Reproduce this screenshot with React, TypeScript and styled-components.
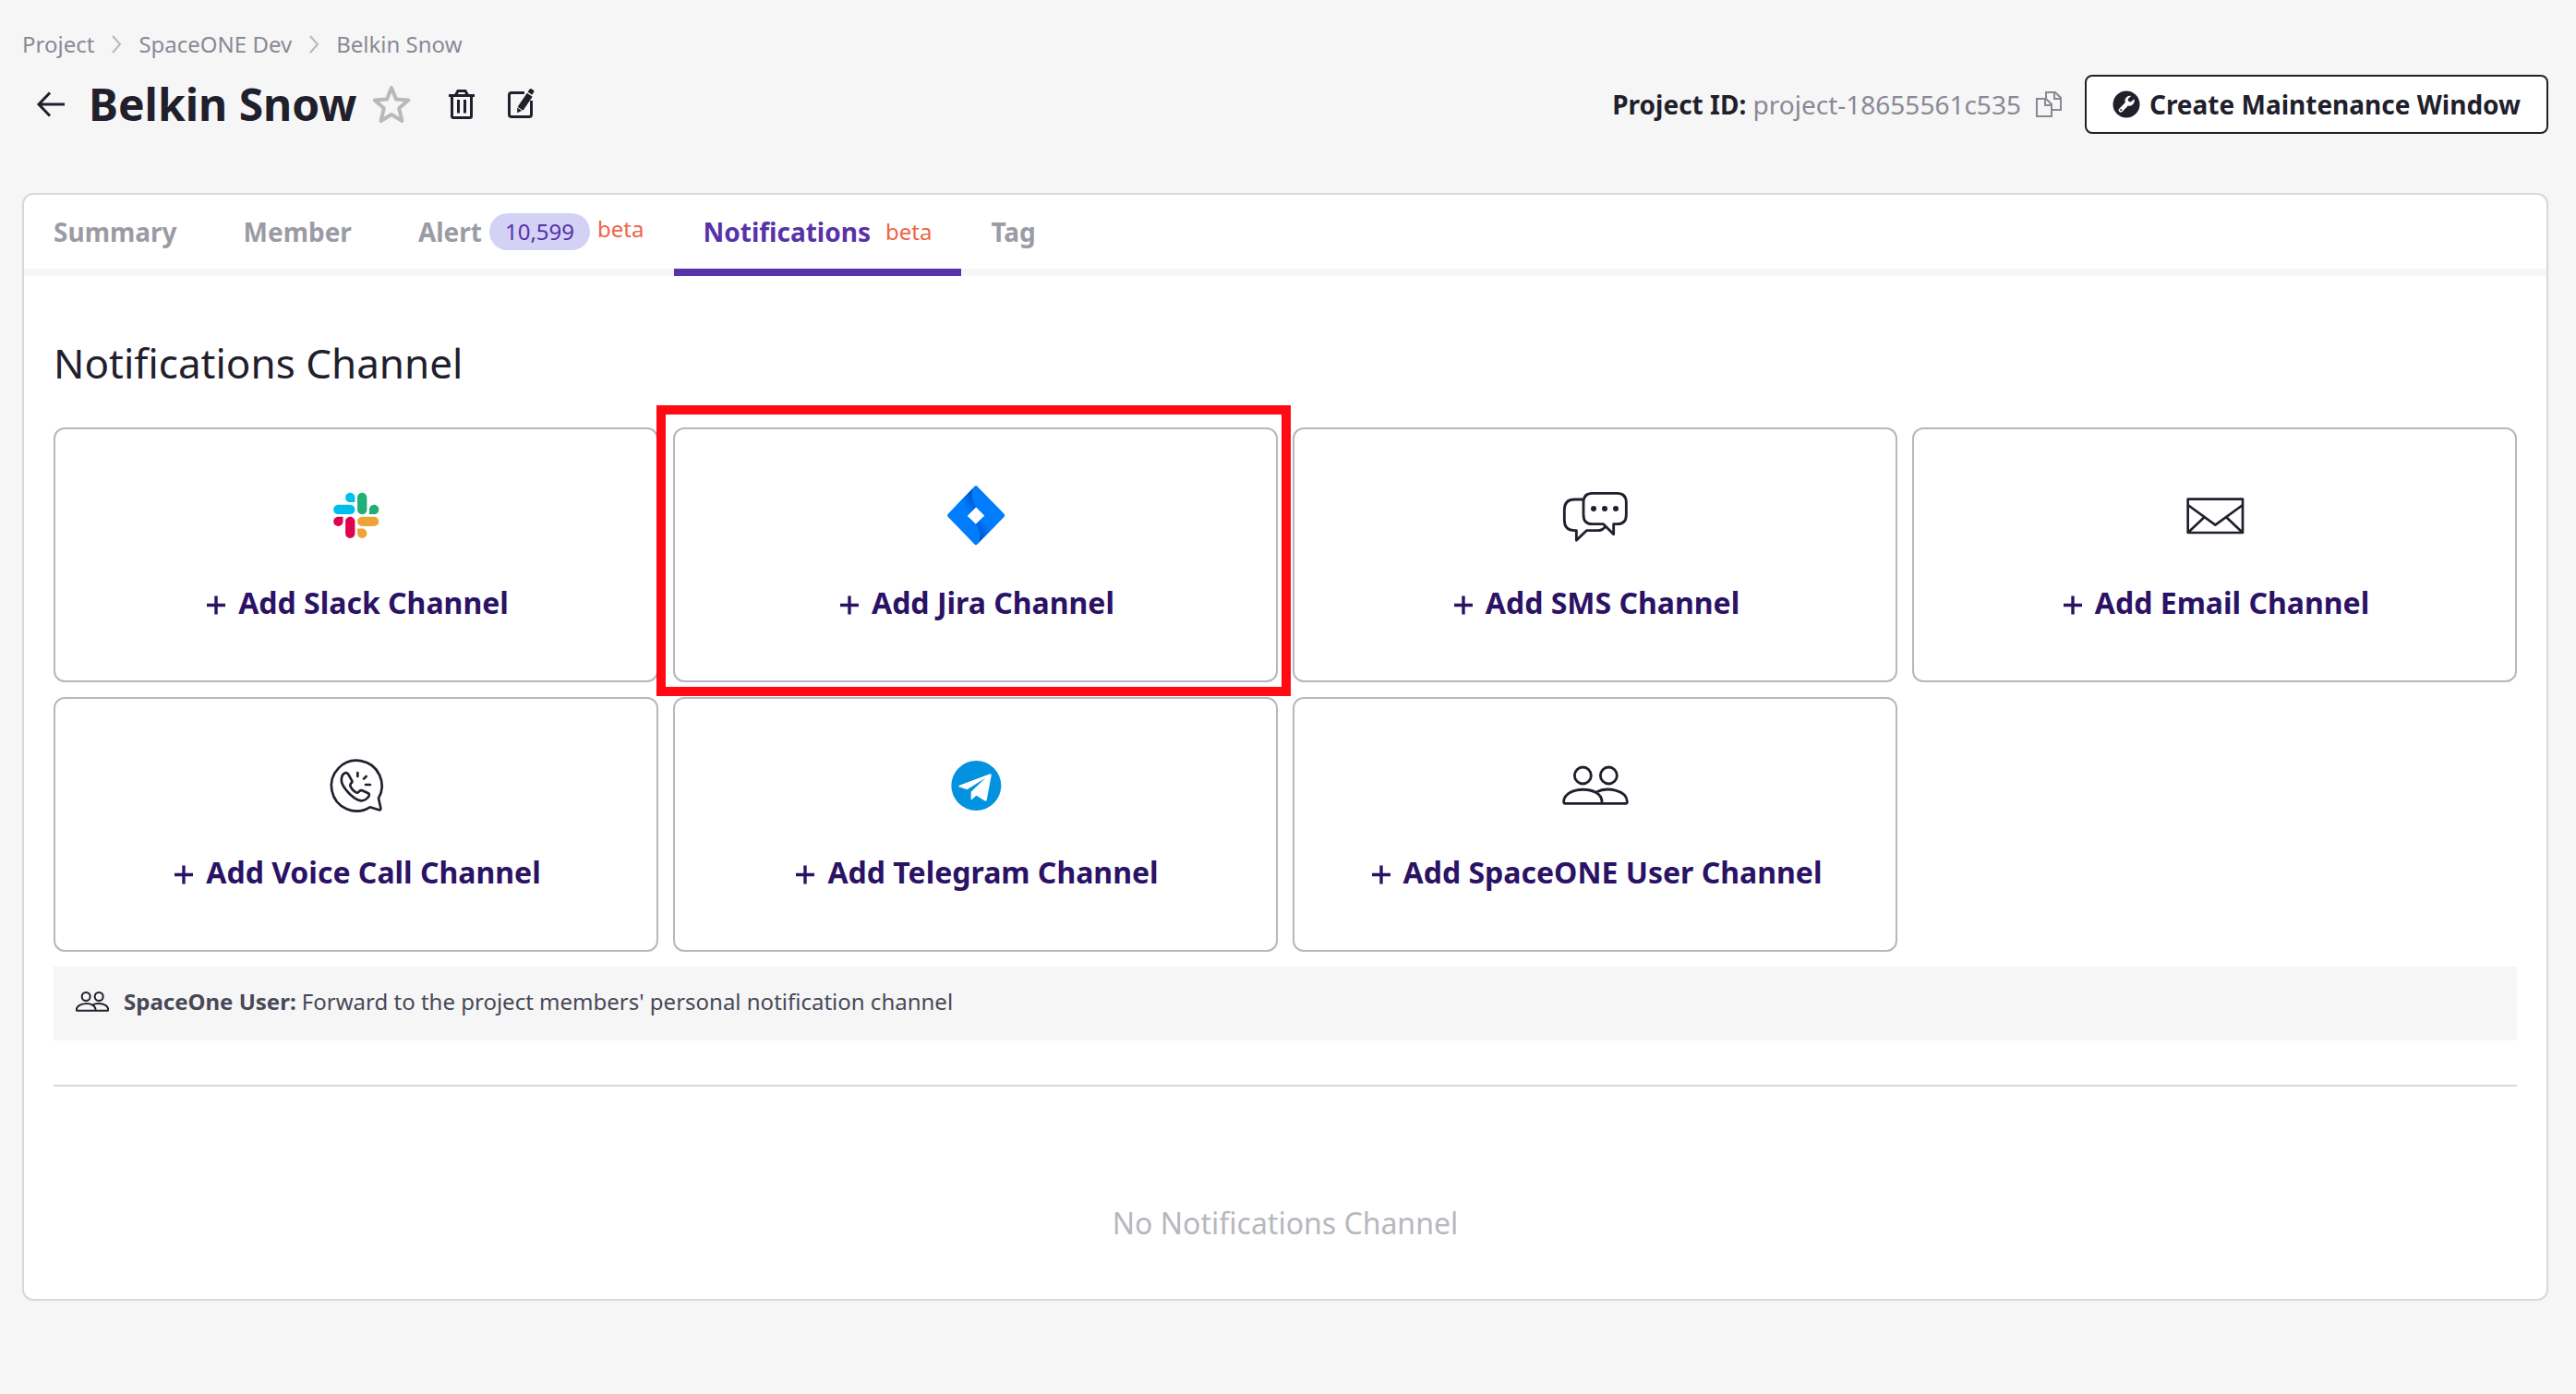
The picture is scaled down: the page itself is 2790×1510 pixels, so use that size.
import React from 'react';
import styled, { createGlobalStyle } from 'styled-components';

const ink = '#1f202c';

const GlobalStyle = createGlobalStyle`
  *, *::before, *::after { box-sizing: border-box; }
  body {
    margin: 0;
    background: #f6f6f6;
    color: ${ink};
    font-family: "Noto Sans", "Open Sans", sans-serif;
  }
  button {
    font-family: inherit;
    color: inherit;
    cursor: pointer;
  }
  svg { display: block; flex: none; }
`;

const Page = styled.div`
  padding: 32px 30px 100px 24px;
`;

const Breadcrumbs = styled.nav`
  display: flex;
  align-items: center;
  gap: 17px;
  font-size: 24px;
  line-height: 32px;
  a {
    color: #898995;
    text-decoration: none;
  }
`;

const Header = styled.header`
  display: flex;
  align-items: center;
  justify-content: space-between;
  min-height: 64px;
  margin: 17px 0 64px;
`;

const HeaderLeft = styled.div`
  display: flex;
  align-items: center;
  padding-left: 8px;
`;

const HeaderRight = styled.div`
  display: flex;
  align-items: center;
`;

const Title = styled.h1`
  margin: 0 14px 0 16px;
  font-size: 48px;
  line-height: 64px;
  font-weight: 700;
`;

const IconButton = styled.button`
  display: flex;
  width: 48px;
  height: 48px;
  padding: 0;
  border: 0;
  background: none;
`;

const Actions = styled.div`
  display: flex;
  gap: 16px;
  margin-left: 28px;
`;

const ProjectId = styled.p`
  margin: 0;
  font-size: 28px;
  line-height: 40px;
  color: #898995;
  strong { color: ${ink}; }
`;

const CopyButton = styled(IconButton)`
  width: 32px;
  height: 32px;
  margin: 0 23px 0 14px;
`;

const MaintenanceButton = styled.button`
  display: flex;
  align-items: center;
  gap: 10px;
  height: 64px;
  padding: 0 28px;
  border: 2px solid ${ink};
  border-radius: 8px;
  background: #fff;
  font-size: 28px;
  font-weight: 700;
`;

const Panel = styled.main`
  border: 2px solid #d8d8da;
  border-radius: 12px;
  background: #fff;
`;

const Tabs = styled.div`
  display: flex;
  height: 88px;
  box-shadow: inset 0 -8px #f6f6f6;
`;

const Tab = styled.button<{ $active?: boolean }>`
  display: flex;
  align-items: center;
  padding: 0 32px 8px;
  border: 0;
  background: none;
  font-size: 28px;
  line-height: 40px;
  font-weight: 700;
  color: ${p => (p.$active ? '#5832a8' : '#9b9ba5')};
  box-shadow: ${p => (p.$active ? 'inset 0 -8px #5832a8' : 'none')};
`;

const TabLabel = styled.span`
  margin-right: 8px;
`;

const Count = styled.span`
  padding: 0 17px;
  border-radius: 20px;
  background: #d3d1f6;
  color: #5832a8;
  font-size: 24px;
  font-weight: 400;
`;

const Beta = styled.span<{ $raised?: boolean }>`
  margin-left: 8px;
  padding-bottom: ${p => (p.$raised ? '6px' : '0')};
  color: #ee6547;
  font-size: 24px;
  font-weight: 400;
`;

const Body = styled.section`
  padding: 62px 32px 60px;
`;

const Heading = styled.h2`
  margin: 0 0 38px;
  font-size: 44px;
  line-height: 64px;
  font-weight: 400;
`;

const ChannelGrid = styled.div`
  display: grid;
  grid-template-columns: repeat(4, 1fr);
  gap: 16px;
`;

const ChannelCell = styled.div`
  position: relative;
  display: flex;
`;

const Channel = styled.button`
  flex: 1;
  display: flex;
  flex-direction: column;
  align-items: center;
  gap: 38px;
  padding: 58px 16px 64px;
  border: 2px solid #b7b7bd;
  border-radius: 12px;
  background: #fff;
`;

const Highlight = styled.div`
  position: absolute;
  inset: -24px -14px -15px -18px;
  border: 10px solid #ff0a12;
  pointer-events: none;
  z-index: 1;
`;

const ChannelLabel = styled.span`
  display: flex;
  align-items: center;
  gap: 12px;
  font-size: 32px;
  line-height: 40px;
  font-weight: 700;
  color: #2b1265;
`;

const Info = styled.p`
  display: flex;
  align-items: center;
  gap: 16px;
  margin: 16px 0 48px;
  padding: 18px 24px 22px;
  background: #f6f6f6;
  font-size: 24px;
  line-height: 40px;
  color: #484858;
`;

const Divider = styled.hr`
  margin: 0;
  border: 0;
  border-top: 2px solid #d8d8da;
`;

const Empty = styled.p`
  margin: 0;
  padding-top: 126px;
  text-align: center;
  font-size: 32px;
  line-height: 44px;
  color: #b7b7bd;
`;

const Chevron = () => (
  <svg width="14" height="20" viewBox="0 0 14 20" fill="none" stroke="#b7b7bd" strokeWidth="2">
    <path d="M3 1l8 9-8 9" />
  </svg>
);

const BackIcon = () => (
  <svg width="48" height="48" viewBox="0 0 48 48" fill="none" stroke={ink} strokeWidth="3">
    <path d="M38 24H10M22 11.500L10 24l12 12.500" />
  </svg>
);

const StarIcon = () => (
  <svg width="48" height="48" viewBox="0 0 48 48" fill="none" stroke="#b9b9bc" strokeWidth="4" strokeLinejoin="round">
    <path d="M24 6l5 12.500 13.200 1-10 8.800 3.200 13.700L24 35l-11.400 7 3.200-13.700-10-8.800 13.200-1z" />
  </svg>
);

const TrashIcon = () => (
  <svg width="48" height="48" viewBox="0 0 48 48" fill="none" stroke={ink} strokeWidth="3">
    <path d="M10 14.500h28M17.500 14l2.500-4.500h8l2.500 4.500M13.500 15v22q0 1.500 1.500 1.500h18q1.500 0 1.500-1.500V15M20.500 19v14.500M27.500 19v14.500" />
  </svg>
);

const EditIcon = () => (
  <svg width="48" height="48" viewBox="0 0 48 48" fill="none">
    <path d="M28 11.500H14q-2.500 0-2.500 2.500v21q0 2.500 2.500 2.500h19q2.500 0 2.500-2.500V20" stroke={ink} strokeWidth="3" />
    <path d="M30.800 11.800l5.900 4-10.200 15-5.900-4z" fill={ink} />
    <path d="M20.300 27.500l4.800 3.400-5 2.300z" fill={ink} />
    <path d="M31.600 10.600l1.900-2.800q1-1.300 2.300-.4l1.800 1.200q1.400 1 .5 2.300l-1.900 2.800z" fill={ink} />
  </svg>
);

const CopyIcon = () => (
  <svg width="32" height="32" viewBox="0 0 32 32" fill="none" stroke="#898995" strokeWidth="2">
    <path d="M3 10h10l6 6v13H3zM12 10v7h7" />
    <path d="M13 9V3h10l6 6v13h-9M22 3v7h7" />
  </svg>
);

const WrenchIcon = () => (
  <svg width="30" height="30" viewBox="0 0 30 30">
    <circle cx="15" cy="15" r="14.500" fill={ink} />
    <path d="M23.500 9.200l-3.700 3.200-2.500-.6-.7-2.500 3.500-3.400a5.600 5.600 0 0 0-6.500 7.300l-6.300 6.500a2.200 2.200 0 0 0 3.200 3.200l6.400-6.400a5.600 5.600 0 0 0 6.600-7.300z" fill="#fff" />
    <circle cx="9.200" cy="21" r="1" fill={ink} />
  </svg>
);

const PlusIcon = () => (
  <svg width="26" height="26" viewBox="0 0 26 26" fill="none" stroke="#2b1265" strokeWidth="3.400">
    <path d="M4 15.500h20M14 5.500v20" />
  </svg>
);

const SlackIcon = () => (
  <svg width="72" height="72" viewBox="-28 -27 180 180">
    <path fill="#e1024f" d="M25.800 77.600c0 7.100-5.800 12.900-12.900 12.900S0 84.700 0 77.600s5.800-12.900 12.900-12.900h12.900v12.900zm6.500 0c0-7.100 5.800-12.900 12.900-12.900s12.900 5.800 12.900 12.900v32.300c0 7.100-5.800 12.900-12.900 12.900s-12.900-5.800-12.900-12.900V77.600z" />
    <path fill="#00bfef" d="M45.200 25.800c-7.100 0-12.900-5.800-12.900-12.900S38.100 0 45.200 0s12.900 5.800 12.900 12.900v12.900H45.200zm0 6.500c7.100 0 12.900 5.800 12.900 12.900s-5.800 12.900-12.900 12.900H12.900C5.800 58.100 0 52.300 0 45.200s5.800-12.900 12.900-12.900h32.300z" />
    <path fill="#21af76" d="M97 45.200c0-7.100 5.800-12.900 12.900-12.900s12.900 5.800 12.900 12.900-5.800 12.900-12.900 12.900H97V45.200zm-6.500 0c0 7.100-5.800 12.900-12.900 12.900s-12.900-5.800-12.900-12.900V12.900C64.700 5.800 70.500 0 77.600 0s12.900 5.800 12.900 12.900v32.300z" />
    <path fill="#eda53a" d="M77.600 97c7.100 0 12.900 5.800 12.900 12.900s-5.800 12.900-12.900 12.900-12.900-5.800-12.900-12.900V97h12.900zm0-6.500c-7.100 0-12.900-5.800-12.900-12.900s5.800-12.900 12.900-12.900h32.300c7.100 0 12.900 5.800 12.900 12.900s-5.800 12.900-12.900 12.900H77.600z" />
  </svg>
);

const JiraIcon = () => (
  <svg width="72" height="72" viewBox="153 69 216 216">
    <defs>
      <linearGradient id="jiraTop" gradientUnits="userSpaceOnUse" x1="254" y1="112" x2="218" y2="134">
        <stop offset="0.100" stopColor="#0055cf" />
        <stop offset="1" stopColor="#007dfc" />
      </linearGradient>
      <linearGradient id="jiraBottom" gradientUnits="userSpaceOnUse" x1="268" y1="240" x2="304" y2="216">
        <stop offset="0.100" stopColor="#0055cf" />
        <stop offset="1" stopColor="#007dfc" />
      </linearGradient>
    </defs>
    <path fill="#007dfc" fillRule="evenodd" d="M257 80q4-4 8 0l88 90q4 5 0 9l-88 90q-4 4-8 0l-87-90q-4-4 0-9zM261 148l-28 28 28 27 28-27z" />
    <path fill="url(#jiraTop)" d="M251 87q-10 35 10 61l-28 28-38-31z" />
    <path fill="url(#jiraBottom)" d="M271 262q10-34-10-59l28-27 37 30z" />
  </svg>
);

const SmsIcon = () => (
  <svg width="72" height="72" viewBox="156 69 216 216" fill="none" stroke={ink} strokeWidth="8.500" strokeLinejoin="round">
    <path d="M224 123h-28q-33 0-33 34v33q0 34 33 34h6v32l33-32h36q16 0 25-13" />
    <path d="M254 103h80q30 0 30 30v40q0 30-30 30h-11v33l-33-33h-36q-29 0-29-30v-40q0-30 29-30z" />
    <g fill={ink} stroke="none">
      <circle cx="258" cy="153" r="9" />
      <circle cx="294" cy="153" r="9" />
      <circle cx="330" cy="153" r="9" />
    </g>
  </svg>
);

const EmailIcon = () => (
  <svg width="72" height="72" viewBox="158 69 216 216" fill="none" stroke={ink} strokeWidth="8" strokeLinejoin="round">
    <path d="M178 122h178v109H178zM178 141l89 65 89-65M178 231l54-51M356 231l-54-51" />
  </svg>
);

const VoiceIcon = () => (
  <svg width="72" height="72" viewBox="149 75 216 216" fill="none" stroke={ink} strokeWidth="8" strokeLinejoin="round" strokeLinecap="round">
    <path d="M329 224a82 82 0 1 0-28 29l29 9q7 1 6-6z" />
    <path d="M213 147q10-10 17-2l12 21q3 5-2 9-5 5-2 11 4 9 13 16 6 5 10 4 3-1 6-5 4-4 9-2l18 8q8 4 3 11-8 13-23 14-14 1-35-18-22-21-29-39-4-17 3-28z" />
    <path d="M261 141v12M289 153l-8 8M287 180h15" />
  </svg>
);

const TelegramIcon = () => (
  <svg width="72" height="72" viewBox="152 75 216 216">
    <circle cx="261" cy="183" r="81" fill="#0392e0" />
    <path fill="#fff" d="M206 182l100-37q5-1 4 5l-15 80q-2 5-7 2l-27-17-14 13q-3 2-3-3v-22l47-45-60 38-26-9q-4-2 1-5z" />
  </svg>
);

const UsersIcon = ({ size = 72, weight = 8.5 }: { size?: number; weight?: number }) => (
  <svg width={size} height={size} viewBox="156 75 216 216" fill="none" stroke={ink} strokeWidth={weight} strokeLinejoin="round">
    <ellipse cx="223" cy="150" rx="27" ry="27" />
    <ellipse cx="307" cy="150" rx="27" ry="27" />
    <path d="M161 234c3-50 121-52 124 0q0 7-4 7H165q-4 0-4-7zM267 204c34-18 97-7 100 30q0 7-4 7h-80" />
  </svg>
);

const channels = [
  { name: 'Add Slack Channel', icon: <SlackIcon /> },
  { name: 'Add Jira Channel', icon: <JiraIcon />, highlighted: true },
  { name: 'Add SMS Channel', icon: <SmsIcon /> },
  { name: 'Add Email Channel', icon: <EmailIcon /> },
  { name: 'Add Voice Call Channel', icon: <VoiceIcon /> },
  { name: 'Add Telegram Channel', icon: <TelegramIcon /> },
  { name: 'Add SpaceONE User Channel', icon: <UsersIcon /> },
];

export default function App() {
  return (
    <>
      <GlobalStyle />
      <Page>
        <Breadcrumbs aria-label="Breadcrumb">
          <a href="#project">Project</a>
          <Chevron />
          <a href="#spaceone-dev">SpaceONE Dev</a>
          <Chevron />
          <a href="#belkin-snow">Belkin Snow</a>
        </Breadcrumbs>
        <Header>
          <HeaderLeft>
            <IconButton aria-label="Back"><BackIcon /></IconButton>
            <Title>Belkin Snow</Title>
            <IconButton aria-label="Favorite"><StarIcon /></IconButton>
            <Actions>
              <IconButton aria-label="Delete"><TrashIcon /></IconButton>
              <IconButton aria-label="Edit"><EditIcon /></IconButton>
            </Actions>
          </HeaderLeft>
          <HeaderRight>
            <ProjectId><strong>Project ID:</strong> project-18655561c535</ProjectId>
            <CopyButton aria-label="Copy project ID"><CopyIcon /></CopyButton>
            <MaintenanceButton><WrenchIcon />Create Maintenance Window</MaintenanceButton>
          </HeaderRight>
        </Header>
        <Panel>
          <Tabs role="tablist">
            <Tab role="tab"><TabLabel>Summary</TabLabel></Tab>
            <Tab role="tab"><TabLabel>Member</TabLabel></Tab>
            <Tab role="tab"><TabLabel>Alert</TabLabel><Count>10,599</Count><Beta $raised>beta</Beta></Tab>
            <Tab role="tab" aria-selected $active><TabLabel>Notifications</TabLabel><Beta>beta</Beta></Tab>
            <Tab role="tab"><TabLabel>Tag</TabLabel></Tab>
          </Tabs>
          <Body>
            <Heading>Notifications Channel</Heading>
            <ChannelGrid>
              {channels.map(c => (
                <ChannelCell key={c.name}>
                  <Channel>
                    {c.icon}
                    <ChannelLabel><PlusIcon />{c.name}</ChannelLabel>
                  </Channel>
                  {c.highlighted && <Highlight />}
                </ChannelCell>
              ))}
            </ChannelGrid>
            <Info>
              <UsersIcon size={36} weight={12} />
              <span><strong>SpaceOne User:</strong> Forward to the project members' personal notification channel</span>
            </Info>
            <Divider />
            <Empty>No Notifications Channel</Empty>
          </Body>
        </Panel>
      </Page>
    </>
  );
}
